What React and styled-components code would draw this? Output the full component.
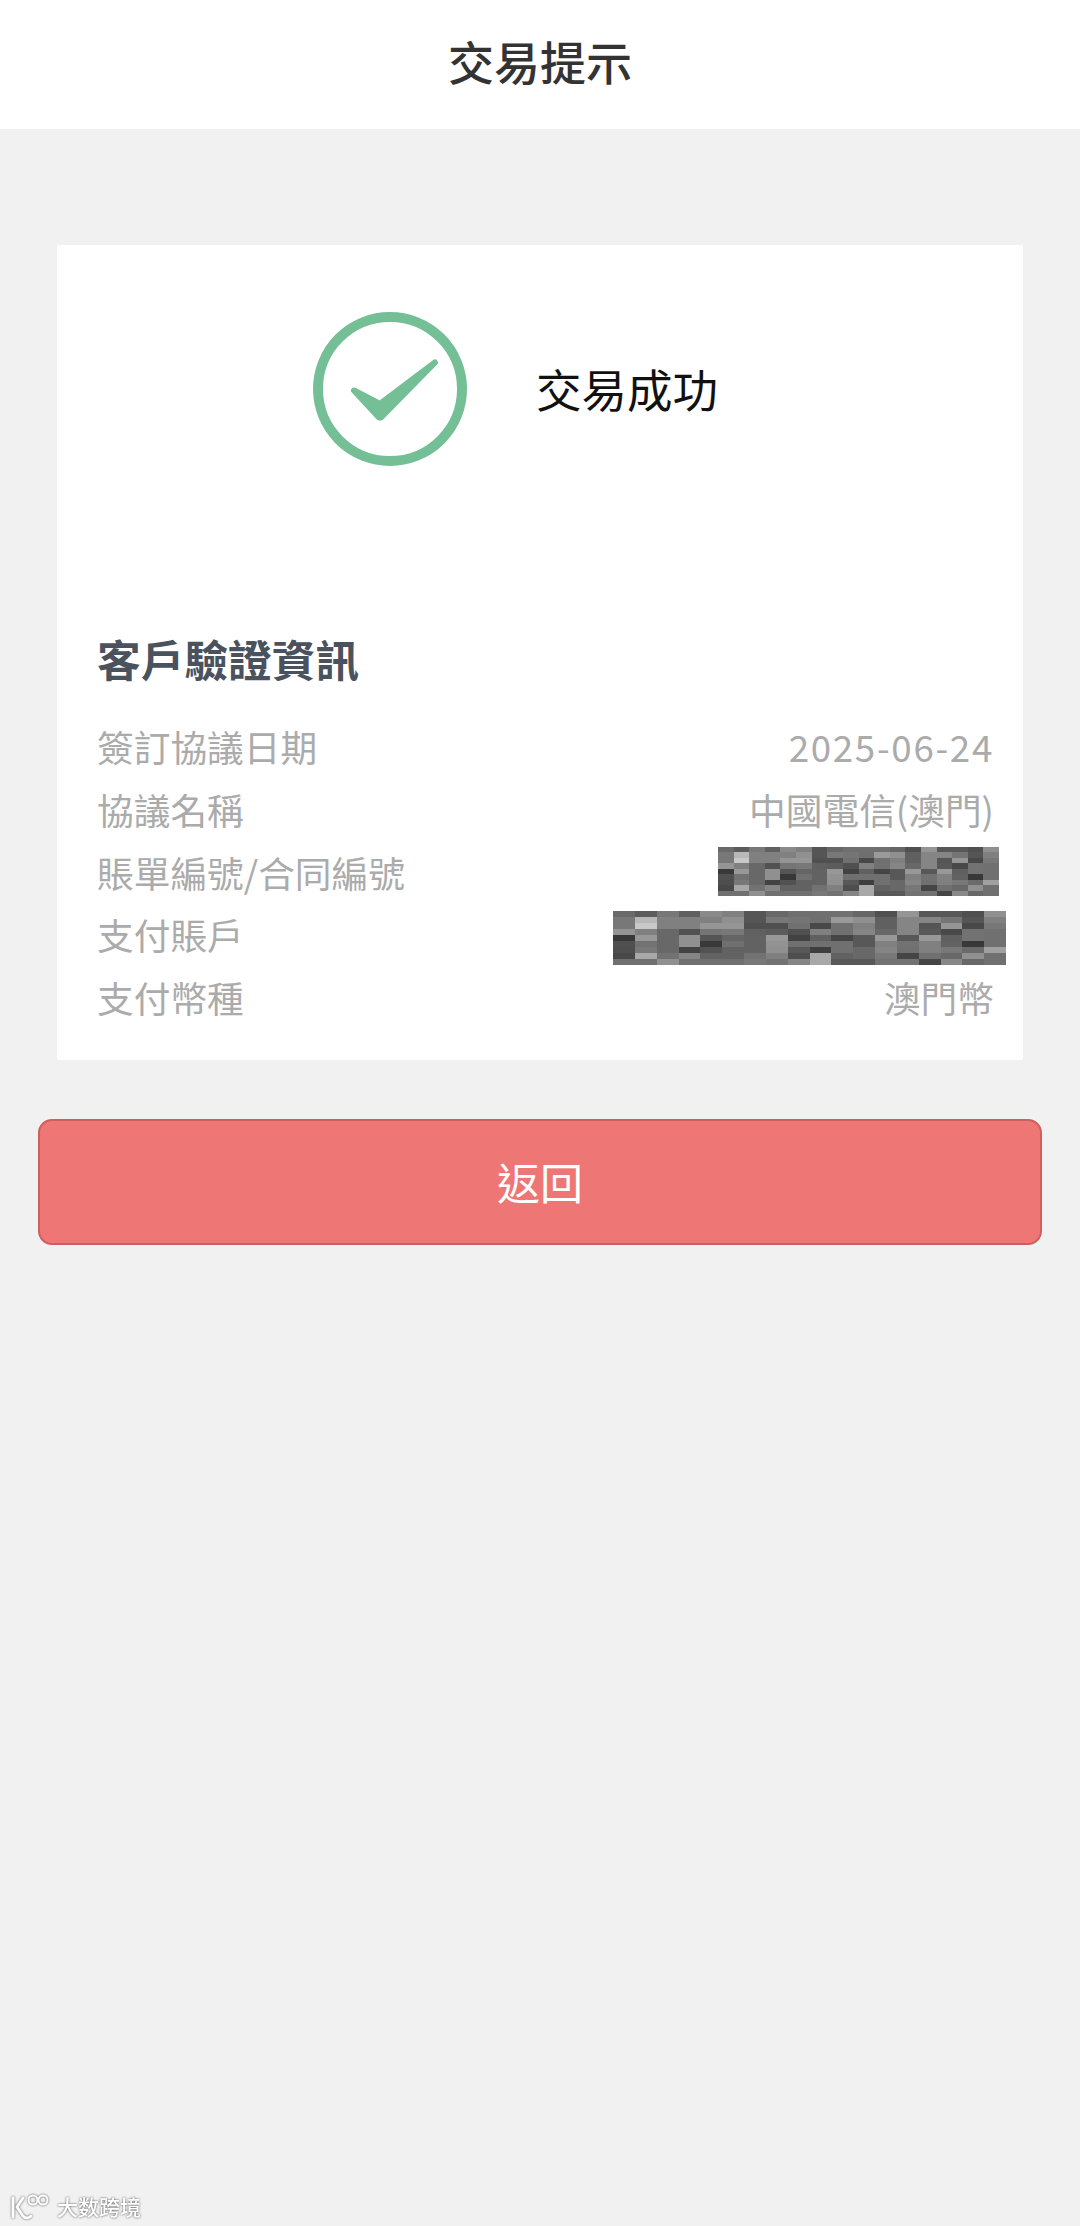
import React from "react";
import styled, { createGlobalStyle } from "styled-components";

const CJK = `"Noto Sans CJK TC", "Noto Sans CJK SC", sans-serif`;

const GlobalStyle = createGlobalStyle`
  html, body {
    margin: 0;
    padding: 0;
    background: #f1f1f1;
    font-family: ${CJK};
  }
`;

const Page = styled.div`
  position: relative;
  width: 1080px;
  height: 2226px;
  overflow: hidden;
  background: #f1f1f1;
`;

const Header = styled.header`
  height: 129px;
  background: #fff;
  display: flex;
  align-items: center;
  justify-content: center;
`;

const Title = styled.h1`
  margin: 0 0 10px;
  font-size: 46px;
  line-height: 60px;
  font-weight: 500;
  color: #333;
`;

const Main = styled.main`
  padding: 116px 38px 0;
`;

const Card = styled.section`
  margin: 0 19px;
  height: 815px;
  box-sizing: border-box;
  padding-top: 67px;
  background: #fff;
  border-radius: 2px;
`;

const Result = styled.div`
  display: flex;
  align-items: center;
  gap: 69px;
  padding-left: 256px;
`;

const ResultText = styled.div`
  font-size: 45.5px;
  line-height: 60px;
  margin-bottom: 3px;
  color: #111;
`;

const Details = styled.div`
  padding: 0 29px 0 40px;
  margin-top: 162px;
`;

const DetailsTitle = styled.h2`
  margin: 0 0 27px;
  font-size: 43.7px;
  line-height: 60px;
  font-weight: 700;
  color: #4a525e;
`;

const Row = styled.div`
  height: 62.7px;
  display: flex;
  align-items: center;
  justify-content: space-between;
  font-size: 36.7px;
  color: #ababab;
`;

const Value = styled.span`
  letter-spacing: ${(p) => (p.$digits ? "1.7px" : "0")};
`;

const Mosaic = styled.svg`
  display: block;
  margin-top: ${(p) => p.$drop}px;
  margin-right: ${(p) => p.$shift}px;
  filter: blur(0.6px);
`;

const BackButton = styled.button`
  display: block;
  width: 100%;
  height: 126px;
  margin-top: 59px;
  padding: 0 0 2px;
  box-sizing: border-box;
  background: #ee7675;
  border: 2px solid #cf5f5e;
  border-radius: 14px;
  font-family: ${CJK};
  font-size: 43px;
  color: #fff;
`;

const Watermark = styled.div`
  position: absolute;
  left: 10px;
  bottom: 5px;
  display: flex;
  align-items: center;
  gap: 8px;
  filter: drop-shadow(0 0 1px rgba(50, 50, 50, 0.85));
`;

const WatermarkText = styled.span`
  font-size: 21px;
  line-height: 30px;
  font-weight: 500;
  color: #fff;
`;

const CELLS = [
  "6a5c78608a8055686f7070665095585850" + "90",
  "78b880808090557875" + "6f9a906085857555" + "80",
  "78c880809595505070487080608555954878",
  "958068527578605c50807085688558487270",
  "389868905565629842604558985898607270",
  "507268903870629270707058807280623870",
  "4e78684252626290583e7068857080786aa0",
  "48a87285626272804ea862687845706890" + "70",
  "707090707070787285a858587272458868" + "70",
].map((row) => row.match(/../g).map((hex) => `#${hex}${hex}${hex}`));

const MosaicBlock = ({ width, height, shift, drop = 0 }) => (
  <Mosaic
    $shift={shift}
    $drop={drop}
    width={width}
    height={height}
    viewBox="0 0 18 9"
    preserveAspectRatio="none"
    shapeRendering="crispEdges"
  >
    {CELLS.map((row, y) =>
      row.map((fill, x) => (
        <rect key={`${x}-${y}`} x={x} y={y} width="1.02" height="1.02" fill={fill} />
      ))
    )}
  </Mosaic>
);

const SuccessIcon = () => (
  <svg width="154" height="154" viewBox="0 0 154 154">
    <circle cx="77" cy="77" r="72" fill="none" stroke="#74bf95" strokeWidth="10" />
    <path
      d="M41 78.5 L67 92 L122 50.5 L68 105.5 L66 105.5 Z"
      fill="#74bf95"
      stroke="#74bf95"
      strokeWidth="6"
      strokeLinejoin="round"
    />
  </svg>
);

const WatermarkLogo = () => (
  <svg width="39" height="30" viewBox="0 0 39 30" fill="none" stroke="#fff" strokeWidth="2.8" strokeLinecap="round">
    <path d="M3 7 V26" />
    <path d="M13 7 L7 16 L13 25 C16 28 19 27 21 25" />
    <circle cx="23" cy="9" r="4.5" strokeWidth="2" />
    <circle cx="33" cy="9" r="4.5" strokeWidth="2" />
  </svg>
);

const App = () => (
  <Page>
    <GlobalStyle />
    <Header>
      <Title>交易提示</Title>
    </Header>
    <Main>
      <Card>
        <Result>
          <SuccessIcon />
          <ResultText>交易成功</ResultText>
        </Result>
        <Details>
          <DetailsTitle>客戶驗證資訊</DetailsTitle>
          <Row>
            <span>簽訂協議日期</span>
            <Value $digits>2025-06-24</Value>
          </Row>
          <Row>
            <span>協議名稱</span>
            <Value>中國電信(澳門)</Value>
          </Row>
          <Row>
            <span>賬單編號/合同編號</span>
            <MosaicBlock width={281} height={49} shift={-5} />
          </Row>
          <Row>
            <span>支付賬戶</span>
            <MosaicBlock width={393} height={54} shift={-12} drop={8} />
          </Row>
          <Row>
            <span>支付幣種</span>
            <Value>澳門幣</Value>
          </Row>
        </Details>
      </Card>
      <BackButton>返回</BackButton>
    </Main>
    <Watermark>
      <WatermarkLogo />
      <WatermarkText>大数跨境</WatermarkText>
    </Watermark>
  </Page>
);

export default App;
